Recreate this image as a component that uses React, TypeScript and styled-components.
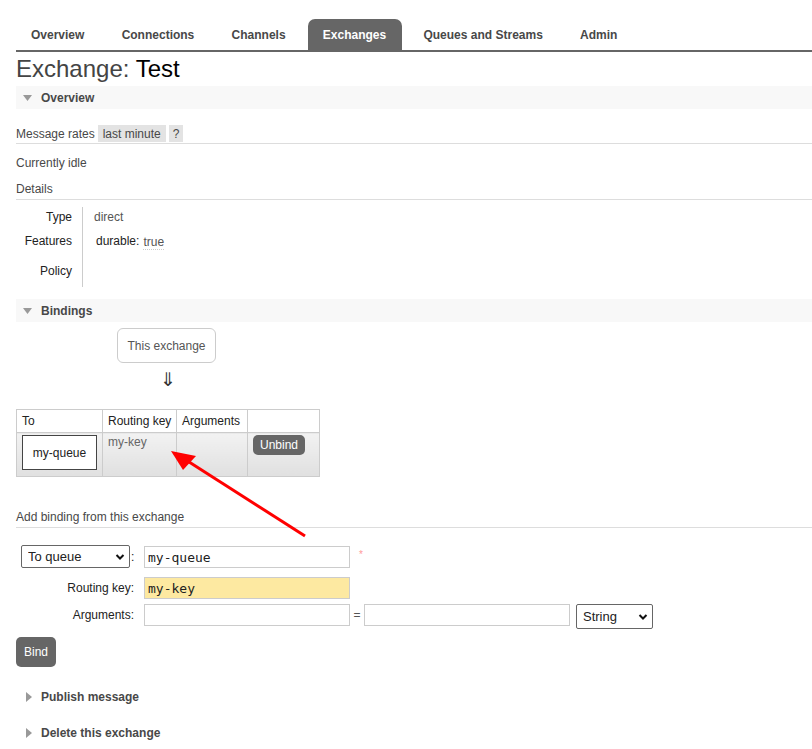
import styled, { createGlobalStyle } from 'styled-components';

const GlobalStyle = createGlobalStyle`
    body {
        margin: 0;
        font-family: "Liberation Sans", Arial, sans-serif;
        font-size: 12px;
        color: #484848;
        background: #fff;
    }
`;

const Page = styled.div`
    position: relative;
    padding: 19px 0 0 16px;
    overflow: hidden;
`;

const Nav = styled.ul`
    display: flex;
    margin: 0;
    padding: 0;
    list-style: none;
    border-bottom: 2px solid #666;
    height: 31px;
`;

const Tab = styled.li<{ $active?: boolean }>`
    display: flex;
    align-items: center;
    padding: 1px 16px 0 15px;
    margin-right: 6.25px;
    font-weight: bold;
    color: ${p => (p.$active ? '#fff' : '#484848')};
    background: ${p => (p.$active ? '#666' : 'transparent')};
    border-radius: 7px 7px 0 0;
`;

const Title = styled.h1`
    margin: 0;
    font-size: 24px;
    font-weight: normal;
    line-height: 34px;
    height: 34px;
    box-sizing: border-box;
    color: #444;
    b {
        font-weight: normal;
        color: #000;
    }
`;

const SectionHead = styled.div<{ $open?: boolean; $top?: number }>`
    display: flex;
    align-items: center;
    height: 23px;
    margin-top: ${p => p.$top ?? 0}px;
    background: ${p => (p.$open ? '#f8f8f8' : 'transparent')};
    font-weight: bold;
    color: #484848;
    svg {
        margin: ${p => (p.$open ? '0 9px 0 7px' : '0 9px 0 10px')};
    }
`;

const RateRow = styled.div`
    display: flex;
    align-items: center;
    gap: 3px;
    margin-top: 16px;
    height: 17px;
    border-bottom: 1px solid #ddd;
    padding-bottom: 1px;
`;

const Pill = styled.span<{ $pad?: number }>`
    display: inline-flex;
    align-items: center;
    height: 17px;
    padding: 0 ${p => p.$pad ?? 5}px;
    background: #e3e3e3;
    color: #484848;
`;

const Plain = styled.div`
    margin-top: 12px;
    line-height: 14px;
`;

const SubHead = styled.div<{ $top: number }>`
    margin-top: ${p => p.$top}px;
    line-height: 14px;
    padding-bottom: 3px;
    border-bottom: 1px solid #ddd;
`;

const Facts = styled.div`
    display: grid;
    grid-template-columns: 67px auto;
    grid-template-rows: 20px 28px 32px;
    margin-top: 7px;
`;

const FactLabel = styled.div`
    display: flex;
    justify-content: flex-end;
    align-items: center;
    padding-right: 10px;
    border-right: 1px solid #ccc;
    color: #222;
`;

const FactValue = styled.div<{ $pad?: number }>`
    display: flex;
    align-items: center;
    padding-left: ${p => p.$pad ?? 11}px;
    color: #555;
    span {
        color: #222;
        margin-right: 4px;
    }
    abbr {
        text-decoration: none;
        border-bottom: 1px dotted #ccc;
        margin-top: 3px;
    }
`;

const ExchangeBox = styled.div`
    display: flex;
    align-items: center;
    justify-content: center;
    margin: 6px 0 0 101px;
    width: 97px;
    height: 33px;
    border: 1px solid #ccc;
    border-radius: 6px;
    color: #555;
`;

const DownArrow = styled.div`
    padding-left: 144px;
    font-family: "DejaVu Sans", sans-serif;
    font-size: 19px;
    line-height: 32px;
    height: 32px;
    color: #333;
`;

const BindTable = styled.table`
    margin-top: 14px;
    border-collapse: collapse;
    table-layout: fixed;
    width: 303px;
    th, td {
        border: 1px solid #ccc;
        padding: 0 6px 0 5px;
        text-align: left;
        white-space: nowrap;
    }
    th {
        height: 22px;
        font-weight: normal;
        color: #222;
        background: #fff;
    }
    td {
        height: 41px;
        vertical-align: top;
        padding-top: 2px;
        background: linear-gradient(#f2f2f2, #e0e0e0);
        color: #666;
    }
`;

const QueueBox = styled.div`
    display: flex;
    align-items: center;
    justify-content: center;
    width: 73px;
    height: 33px;
    background: #fff;
    border: 1px solid #444;
    color: #222;
`;

const Button = styled.button<{ $big?: boolean }>`
    display: block;
    border: none;
    border-radius: 5px;
    background: #666;
    color: #fff;
    font-family: inherit;
    font-size: 12px;
    padding: 0 ${p => (p.$big ? '8px' : '7px')};
    height: ${p => (p.$big ? '30px' : '20px')};
    margin-top: ${p => (p.$big ? '8px' : '0')};
`;

const FormRow = styled.div<{ $top: number }>`
    display: flex;
    align-items: flex-start;
    margin-top: ${p => p.$top}px;
`;

const Label = styled.div`
    display: flex;
    align-items: center;
    justify-content: flex-end;
    width: 118px;
    height: 22px;
    padding-right: 10px;
    color: #222;
`;

const SelectCell = styled.div`
    display: flex;
    align-items: center;
    width: 128px;
    padding-left: 5px;
    box-sizing: border-box;
    color: #222;
    span {
        margin-left: 1px;
    }
`;

const SelectWrap = styled.div<{ $width: number; $height: number }>`
    position: relative;
    width: ${p => p.$width}px;
    height: ${p => p.$height}px;
    select {
        appearance: none;
        width: 100%;
        height: 100%;
        border: 1px solid #666;
        border-radius: 2px;
        background: #fff;
        font-family: "Liberation Sans", Arial, sans-serif;
        font-size: 13px;
        color: #222;
        padding: 0 0 0 6px;
    }
    svg {
        position: absolute;
        right: 5px;
        top: 50%;
        margin-top: -4px;
        pointer-events: none;
    }
`;

const Field = styled.input<{ $hl?: boolean }>`
    box-sizing: border-box;
    width: 206px;
    height: 22px;
    margin: 0;
    border: 1px solid #ccc;
    background: ${p => (p.$hl ? '#fde9a1' : '#fff')};
    font-family: "DejaVu Sans Mono", monospace;
    font-size: 13px;
    color: #222;
    padding: 0 3px;
    outline: none;
`;

const Mark = styled.span<{ $red?: boolean }>`
    display: flex;
    align-items: center;
    justify-content: center;
    width: 14px;
    height: 22px;
    margin-left: ${p => (p.$red ? '4px' : '0')};
    color: ${p => (p.$red ? '#f99' : '#555')};
    font-size: ${p => (p.$red ? '10px' : '12px')};
    padding-bottom: ${p => (p.$red ? '4px' : '0')};
    box-sizing: border-box;
`;

const Overlay = styled.svg`
    position: absolute;
    left: 0;
    top: 0;
    pointer-events: none;
`;

const Chevron = () => (
    <svg width="10" height="8" viewBox="0 0 10 8">
        <path d="M1.5 2 L5 5.5 L8.5 2" stroke="#111" strokeWidth="2" fill="none" />
    </svg>
);

const Triangle = ({ open }: { open?: boolean }) => (
    open ? (
        <svg width="9" height="6" viewBox="0 0 9 6">
            <path d="M0 0 H9 L4.5 6 Z" fill="#999" />
        </svg>
    ) : (
        <svg width="6" height="10" viewBox="0 0 6 10">
            <path d="M0 0 L6 5 L0 10 Z" fill="#999" />
        </svg>
    )
);

const tabs = ['Overview', 'Connections', 'Channels', 'Exchanges', 'Queues and Streams', 'Admin'];

const App = () => {
    return (
        <Page>
            <GlobalStyle />
            <Nav>
                {tabs.map(t => (
                    <Tab key={t} $active={t === 'Exchanges'}>{t}</Tab>
                ))}
            </Nav>
            <Title>Exchange: <b>Test</b></Title>

            <SectionHead $open><Triangle open />Overview</SectionHead>
            <RateRow>
                <span>Message rates</span>
                <Pill>last minute</Pill>
                <Pill $pad={4}>?</Pill>
            </RateRow>
            <Plain>Currently idle</Plain>
            <SubHead $top={12}>Details</SubHead>
            <Facts>
                <FactLabel>Type</FactLabel>
                <FactValue>direct</FactValue>
                <FactLabel>Features</FactLabel>
                <FactValue $pad={13}><span>durable:</span><abbr>true</abbr></FactValue>
                <FactLabel>Policy</FactLabel>
                <FactValue />
            </Facts>

            <SectionHead $open $top={12}><Triangle open />Bindings</SectionHead>
            <ExchangeBox>This exchange</ExchangeBox>
            <DownArrow>⇓</DownArrow>
            <BindTable>
                <colgroup>
                    <col style={{ width: 86 }} />
                    <col style={{ width: 74 }} />
                    <col style={{ width: 71 }} />
                    <col style={{ width: 72 }} />
                </colgroup>
                <thead>
                    <tr>
                        <th>To</th>
                        <th>Routing key</th>
                        <th>Arguments</th>
                        <th />
                    </tr>
                </thead>
                <tbody>
                    <tr>
                        <td><QueueBox>my-queue</QueueBox></td>
                        <td>my-key</td>
                        <td />
                        <td><Button>Unbind</Button></td>
                    </tr>
                </tbody>
            </BindTable>

            <SubHead $top={33}>Add binding from this exchange</SubHead>
            <FormRow $top={17}>
                <SelectCell>
                    <SelectWrap $width={109} $height={23}>
                        <select defaultValue="queue">
                            <option value="queue">To queue</option>
                            <option value="exchange">To exchange</option>
                        </select>
                        <Chevron />
                    </SelectWrap>
                    <span>:</span>
                </SelectCell>
                <Field defaultValue="my-queue" style={{ marginTop: 1 }} />
                <Mark $red>*</Mark>
            </FormRow>
            <FormRow $top={9}>
                <Label>Routing key:</Label>
                <Field $hl defaultValue="my-key" />
            </FormRow>
            <FormRow $top={5}>
                <Label>Arguments:</Label>
                <Field />
                <Mark>=</Mark>
                <Field />
                <SelectWrap $width={77} $height={25} style={{ marginLeft: 6 }}>
                    <select defaultValue="string">
                        <option value="string">String</option>
                        <option value="number">Number</option>
                        <option value="boolean">Boolean</option>
                    </select>
                    <Chevron />
                </SelectWrap>
            </FormRow>
            <Button $big>Bind</Button>

            <SectionHead $top={18}><Triangle />Publish message</SectionHead>
            <SectionHead $top={13}><Triangle />Delete this exchange</SectionHead>

            <Overlay width="812" height="749">
                <line x1="305" y1="536" x2="186" y2="460" stroke="#f00" strokeWidth="3" />
                <path d="M171 451 L196 456 L183 470 Z" fill="#f00" />
            </Overlay>
        </Page>
    );
};

export default App;
